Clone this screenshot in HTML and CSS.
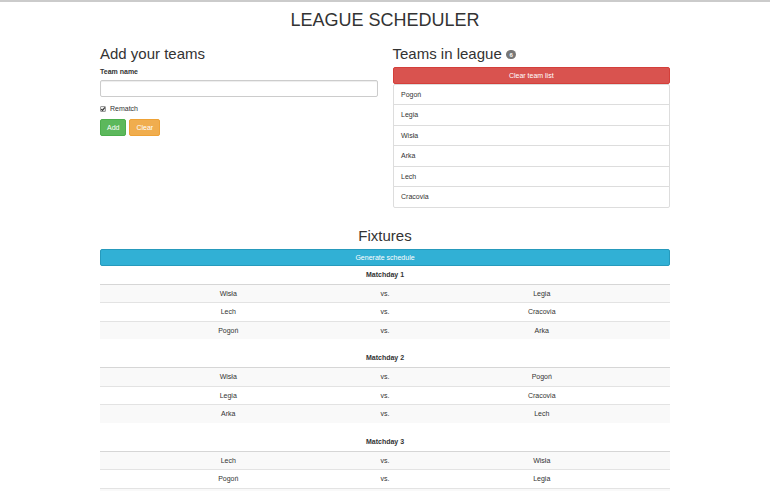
FILE: index.html
```html
<!DOCTYPE html>
<html lang="en">
<head>
<meta charset="utf-8">
<title>League Scheduler</title>
<link rel="stylesheet" href="styles.css">
</head>
<body>
<div class="container">
  <h1 class="title">LEAGUE SCHEDULER</h1>
  <div class="top-row">
    <section class="col">
      <h2 class="heading">Add your teams</h2>
      <form class="team-form">
        <div class="form-group">
          <label class="field-label" for="team-name">Team name</label>
          <input class="form-control" id="team-name" type="text">
        </div>
        <label class="check">
          <span class="check-box"><svg viewBox="0 0 6 6" width="6" height="6"><path d="M1.2 3.1 L2.5 4.4 L4.9 1.4" fill="none" stroke="#333" stroke-width="1.1"/></svg></span>
          <span>Rematch</span>
        </label>
        <div class="actions">
          <button type="button" class="btn btn-success">Add</button>
          <button type="button" class="btn btn-warning">Clear</button>
        </div>
      </form>
    </section>
    <section class="col">
      <h2 class="heading">Teams in league <span class="badge">6</span></h2>
      <button type="button" class="btn btn-danger btn-block">Clear team list</button>
      <ul class="list-group">
        <li class="list-item">Pogoń</li>
        <li class="list-item">Legia</li>
        <li class="list-item">Wisła</li>
        <li class="list-item">Arka</li>
        <li class="list-item">Lech</li>
        <li class="list-item">Cracovia</li>
      </ul>
    </section>
  </div>
  <section class="fixtures">
    <h2 class="heading center">Fixtures</h2>
    <button type="button" class="btn btn-info btn-block">Generate schedule</button>
    <table class="matchday">
      <thead><tr><th colspan="3">Matchday 1</th></tr></thead>
      <tbody>
        <tr><td class="team">Wisła</td><td class="vs">vs.</td><td class="team">Legia</td></tr>
        <tr><td class="team">Lech</td><td class="vs">vs.</td><td class="team">Cracovia</td></tr>
        <tr><td class="team">Pogoń</td><td class="vs">vs.</td><td class="team">Arka</td></tr>
      </tbody>
    </table>
    <table class="matchday">
      <thead><tr><th colspan="3">Matchday 2</th></tr></thead>
      <tbody>
        <tr><td class="team">Wisła</td><td class="vs">vs.</td><td class="team">Pogoń</td></tr>
        <tr><td class="team">Legia</td><td class="vs">vs.</td><td class="team">Cracovia</td></tr>
        <tr><td class="team">Arka</td><td class="vs">vs.</td><td class="team">Lech</td></tr>
      </tbody>
    </table>
    <table class="matchday">
      <thead><tr><th colspan="3">Matchday 3</th></tr></thead>
      <tbody>
        <tr><td class="team">Lech</td><td class="vs">vs.</td><td class="team">Wisła</td></tr>
        <tr><td class="team">Pogoń</td><td class="vs">vs.</td><td class="team">Legia</td></tr>
        <tr><td class="team">Cracovia</td><td class="vs">vs.</td><td class="team">Arka</td></tr>
      </tbody>
    </table>
  </section>
</div>
</body>
</html>
```

FILE: styles.css
```css
* {
  box-sizing: border-box;
}

body {
  margin: 0;
  border-top: 2px solid #cbcbcb;
  background: #ffffff;
  color: #333333;
  font-family: "Liberation Sans", Arial, Helvetica, sans-serif;
  font-size: 7px;
  line-height: 10px;
}

.container {
  width: 570px;
  margin: 0 auto;
}

.title {
  margin: 9px 0 5px;
  font-size: 18px;
  line-height: 19.8px;
  font-weight: normal;
  text-align: center;
}

.top-row {
  display: grid;
  grid-template-columns: 1fr 1fr;
  column-gap: 15px;
}

.heading {
  margin: 10px 0 5px;
  font-size: 15px;
  line-height: 16.5px;
  font-weight: normal;
}

.center {
  text-align: center;
}

.form-group {
  margin-bottom: 7.5px;
}

.field-label {
  display: inline-block;
  margin-bottom: 2.5px;
  font-weight: bold;
}

.form-control {
  display: block;
  width: 100%;
  height: 17px;
  padding: 3px 6px;
  border: 1px solid #cccccc;
  border-radius: 2px;
  box-shadow: inset 0 1px 1px rgba(0, 0, 0, 0.075);
  font: inherit;
  color: #555555;
  background: #ffffff;
}

.check {
  display: flex;
  align-items: center;
  gap: 4px;
  height: 10px;
  margin-bottom: 5px;
  font-weight: normal;
}

.check-box {
  display: flex;
  width: 6px;
  height: 6px;
  border: 1px solid #9a9a9a;
  border-radius: 1px;
  background: linear-gradient(#f4f4f4, #dcdcdc);
  align-items: center;
  justify-content: center;
  overflow: hidden;
}

.check-box svg {
  display: block;
  flex: none;
}

.actions {
  display: flex;
  gap: 3px;
}

.btn {
  display: inline-block;
  padding: 2.25px 6px;
  border: 1px solid transparent;
  border-radius: 2px;
  color: #ffffff;
  font-family: inherit;
  font-size: 7px;
  line-height: 10px;
  text-align: center;
  cursor: pointer;
}

.btn-block {
  display: block;
  width: 100%;
}

.btn-success {
  background: #5cb85c;
  border-color: #4cae4c;
}

.btn-warning {
  background: #f0ad4e;
  border-color: #eea236;
}

.btn-danger {
  background: #d9534f;
  border-color: #d43f3a;
}

.btn-info {
  background: #31b0d5;
  border-color: #269abc;
}

.badge {
  display: inline-block;
  min-width: 5px;
  padding: 1.5px 3.5px;
  border-radius: 5px;
  background: #777777;
  color: #ffffff;
  font-size: 6px;
  font-weight: bold;
  line-height: 1;
  vertical-align: middle;
  text-align: center;
}

.list-group {
  margin: 0 0 10px;
  padding: 0;
  list-style: none;
}

.list-item {
  padding: 4.75px 7.5px;
  margin-bottom: -1px;
  border: 1px solid #dddddd;
  background: #ffffff;
}

.list-item:first-child {
  border-radius: 2px 2px 0 0;
}

.list-item:last-child {
  margin-bottom: 0;
  border-radius: 0 0 2px 2px;
}

.matchday {
  width: 100%;
  margin-bottom: 10px;
  border-collapse: collapse;
}

.matchday th {
  padding: 4px;
  border-bottom: 1px solid #d6d6d6;
  font-weight: bold;
  text-align: center;
  vertical-align: bottom;
}

.matchday td {
  padding: 3.75px 4px;
  border-top: 1px solid #e3e3e3;
  text-align: center;
}

.matchday tbody tr:nth-child(odd) td {
  background: #f9f9f9;
}

.team {
  width: 45%;
}

.vs {
  width: 10%;
}
```
